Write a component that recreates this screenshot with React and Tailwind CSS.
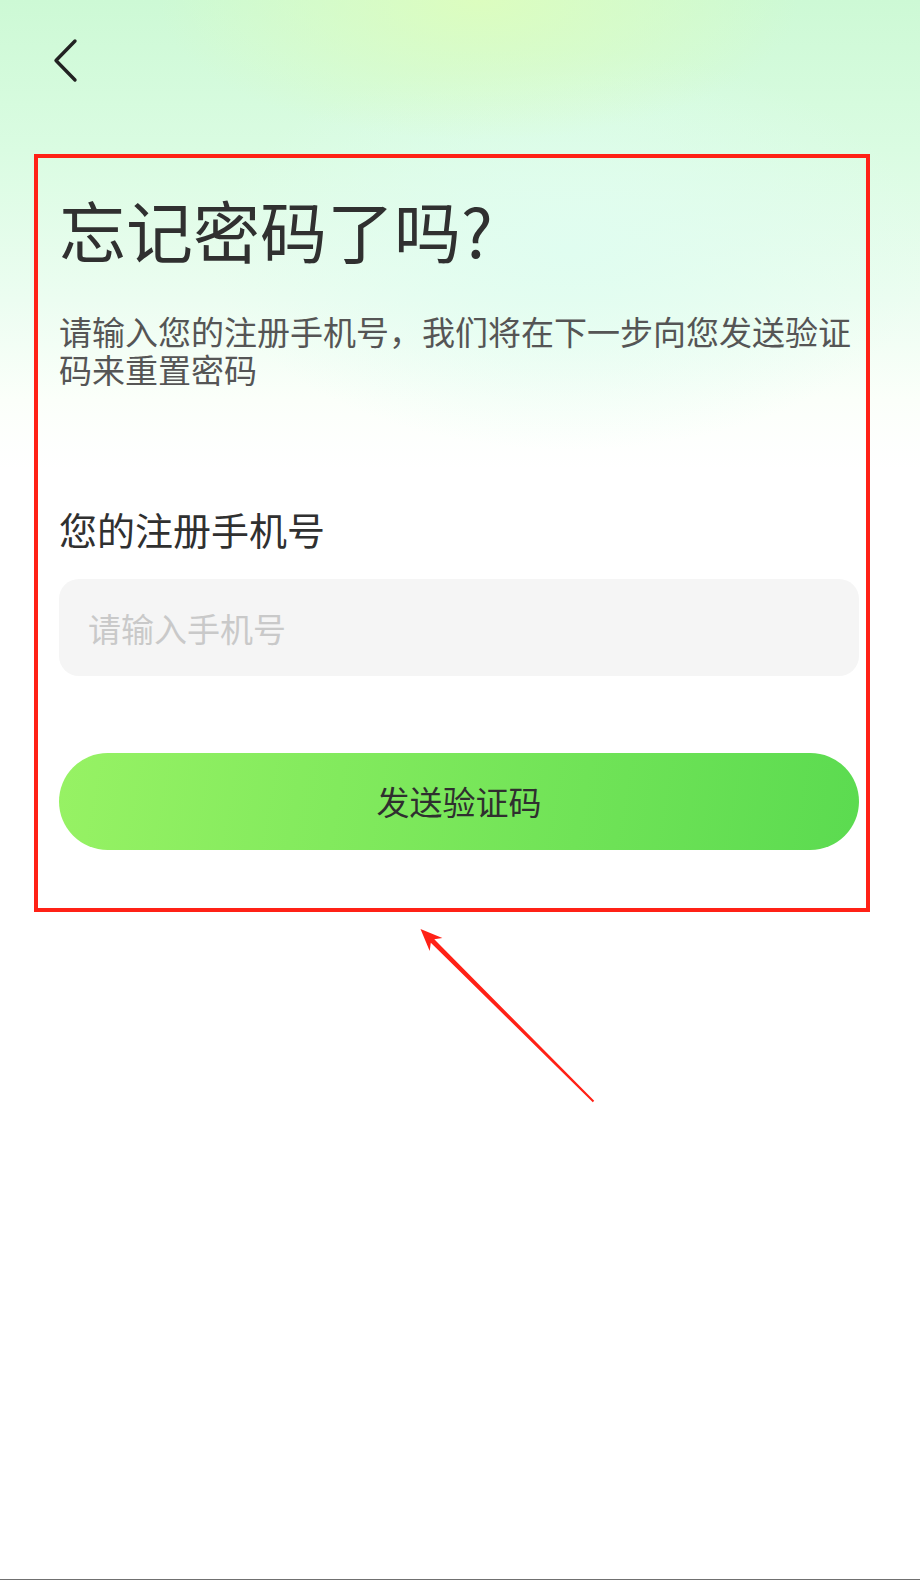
import React from 'react';

/* ── Forgot password screen ── */
export default function App() {
  return (
    <div className="relative min-h-[1580px] bg-white border-b border-[#707070] font-['Noto_Sans_CJK_SC','Noto_Sans',sans-serif] bg-[radial-gradient(ellipse_320px_140px_at_52%_0px,#dcfdbf,transparent),radial-gradient(ellipse_360px_200px_at_62%_250px,#e0fdf0,transparent),linear-gradient(180deg,#cdf9d5_0px,#dafce2_150px,#ecfdf1_300px,#fbfffa_400px,#ffffff_470px)]">
      {/* Back */}
      <div className="pt-[38px] pl-[52px]">
        <svg width="28" height="46" viewBox="0 0 28 46" fill="none">
          <polyline points="23,3 4,22.5 23,42" stroke="#222" strokeWidth="3.4" strokeLinecap="round" strokeLinejoin="round" />
        </svg>
      </div>

      <div className="pl-[59px] pr-[61px]">
        <h1 className="mt-[105px] text-[67px] leading-[80px] text-[#303030] font-normal">忘记密码了吗?</h1>
        <p className="mt-[43px] text-[33px] leading-[38px] text-[#555]">
          请输入您的注册手机号，我们将在下一步向您发送验证码来重置密码
        </p>

        <p className="mt-[119px] text-[38px] leading-[44px] text-[#303030]">您的注册手机号</p>
        <input
          className="mt-[28px] w-full h-[97px] rounded-[20px] bg-[#f5f5f5] px-[29px] text-[33px] text-[#333] outline-none placeholder:text-[#c9c9c9]"
          placeholder="请输入手机号"
        />

        <button className="mt-[77px] w-full h-[97px] rounded-full bg-[linear-gradient(100deg,#97f264,#5bdb50)] text-[33px] text-[#2f2f2f]">
          发送验证码
        </button>
      </div>

      {/* Annotation */}
      <div className="absolute left-[34px] top-[154px] w-[836px] h-[758px] border-[4px] border-[#ff2116] pointer-events-none" />
      <svg className="absolute left-0 top-0 pointer-events-none" width="920" height="1200" viewBox="0 0 920 1200">
        <polygon
          points="420.5,929 442.4,938.1 434.3,939.2 594.2,1100.8 592.8,1102.2 430.8,942.8 429.7,950.9"
          fill="#ff2116"
        />
      </svg>
    </div>
  );
}
